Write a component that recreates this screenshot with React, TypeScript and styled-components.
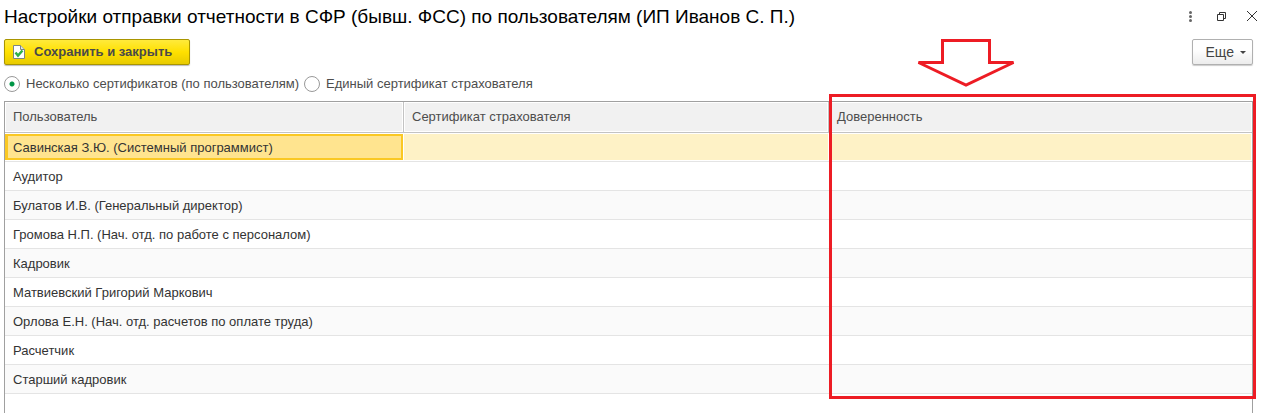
import React, { useState } from "react";
import styled, { createGlobalStyle } from "styled-components";

const GlobalStyle = createGlobalStyle`
  *, *::before, *::after { box-sizing: border-box; }
  body {
    margin: 0;
    background: #fff;
    color: #333;
    font: 13px/16px "Liberation Sans", Arial, sans-serif;
  }
`;

const Page = styled.main`
  display: flex;
  flex-direction: column;
  min-height: 100vh;
  padding: 0 14px 0 4px;
`;

const TitleBar = styled.header`
  display: flex;
  align-items: center;
  justify-content: space-between;
  height: 34px;
  margin-right: -7px;
`;

const Title = styled.h1`
  margin: 0;
  color: #000;
  font-size: 19px;
  line-height: 24px;
  font-weight: 400;
`;

const WindowControls = styled.div`
  display: flex;
  gap: 15px;
`;

const IconButton = styled.button`
  display: flex;
  padding: 0;
  border: 0;
  background: none;
  color: #333;
`;

const Toolbar = styled.div`
  display: flex;
  align-items: center;
  justify-content: space-between;
  padding-top: 5px;
`;

const SaveButton = styled.button`
  display: flex;
  align-items: center;
  gap: 8px;
  height: 26px;
  padding: 0 17px 0 8px;
  border: 1px solid #a99500;
  border-radius: 2px;
  background: linear-gradient(#ffea3c, #ffe000 50%, #e8cb00);
  box-shadow: 0 1px 1px #bbb;
  color: #4a4a4a;
  font: bold 13px/16px "Liberation Sans", Arial, sans-serif;
`;

const MoreButton = styled.button`
  display: flex;
  align-items: center;
  gap: 6px;
  height: 26px;
  padding: 0 6px 0 13px;
  border: 1px solid #b0b0b0;
  border-radius: 2px;
  background: linear-gradient(#fff 40%, #ececec);
  box-shadow: 0 1px 1px #ccc;
  color: #444;
  font: 14px/16px "Liberation Sans", Arial, sans-serif;
`;

const ModeGroup = styled.div`
  display: flex;
  gap: 5px;
  padding: 11px 0 9px;
`;

const ModeOption = styled.label`
  display: flex;
  align-items: center;
  gap: 6px;
  color: #4d4d4d;
`;

const Radio = styled.input`
  appearance: none;
  width: 16px;
  height: 16px;
  margin: 0;
  border: 1px solid #999;
  border-radius: 50%;
  background: #fff;

  &:checked {
    background: radial-gradient(circle, #009646 2px, #fff 3px);
  }
`;

const Frame = styled.section`
  flex: 1;
  border: 1px solid #a0a0a0;
  border-bottom: 0;
`;

const TableArea = styled.div`
  position: relative;
`;

const Table = styled.table`
  width: 100%;
  table-layout: fixed;
  border-collapse: separate;
  border-spacing: 0;
`;

const UserCol = styled.col`
  width: 399px;
`;

const CertificateCol = styled.col`
  width: 425px;
`;

const HeadCell = styled.th`
  height: 31px;
  padding: 0 8px;
  border-bottom: 1px solid #c3c3c3;
  background: #f1f1f1;
  box-shadow: inset 0 0 0 1px #fff;
  color: #4d4d4d;
  font-weight: 400;
  text-align: left;

  &:not(:last-child) {
    border-right: 1px solid #c3c3c3;
  }
`;

const Row = styled.tr<{ $selected: boolean }>`
  background: ${(p) => (p.$selected ? "#fef2c6" : "#fff")};

  &:nth-child(odd) {
    background: ${(p) => (p.$selected ? "#fef2c6" : "#fafafa")};
  }
`;

const Cell = styled.td<{ $selected: boolean; $current?: boolean }>`
  height: 29px;
  padding: 2px 8px 0;
  border-bottom: 1px solid #e4e4e4;
  box-shadow: ${(p) =>
    p.$current
      ? "inset 0 -1px #fff, inset -1px 0 #fff, inset 0 1px #fff, inset 0 0 0 3px #fac823"
      : p.$selected
        ? "inset 0 1px #fff, inset 0 -1px #fff, inset -1px 0 #fff"
        : "none"};
  background: ${(p) => (p.$current ? "#ffe48f" : "transparent")};
`;

const Highlight = styled.div`
  position: absolute;
  top: -8px;
  right: -4px;
  bottom: -5px;
  left: 824px;
  border: 3px solid #ed1c24;
  pointer-events: none;
`;

const Arrow = styled.svg`
  position: absolute;
  top: -63px;
  left: 83px;
`;

const users = [
  "Савинская З.Ю. (Системный программист)",
  "Аудитор",
  "Булатов И.В. (Генеральный директор)",
  "Громова Н.П. (Нач. отд. по работе с персоналом)",
  "Кадровик",
  "Матвиевский Григорий Маркович",
  "Орлова Е.Н. (Нач. отд. расчетов по оплате труда)",
  "Расчетчик",
  "Старший кадровик",
];

export default function App() {
  const [mode, setMode] = useState("several");
  const [selected, setSelected] = useState(0);

  return (
    <>
      <GlobalStyle />
      <Page>
        <TitleBar>
          <Title>Настройки отправки отчетности в СФР (бывш. ФСС) по пользователям (ИП Иванов С. П.)</Title>
          <WindowControls>
            <IconButton type="button" aria-label="Меню">
              <svg width="16" height="16" fill="#666">
                <circle cx="8.500" cy="3.500" r="1.500" />
                <circle cx="8.500" cy="7.500" r="1.500" />
                <circle cx="8.500" cy="11.500" r="1.500" />
              </svg>
            </IconButton>
            <IconButton type="button" aria-label="Развернуть">
              <svg width="16" height="16" fill="none" stroke="currentColor">
                <path d="M4.500 5.500h6v6h-6zM6.500 5.500v-2h6v6h-2" />
              </svg>
            </IconButton>
            <IconButton type="button" aria-label="Закрыть">
              <svg width="16" height="16" fill="none" stroke="currentColor">
                <path d="M3 2l10 10M13 2L3 12" />
              </svg>
            </IconButton>
          </WindowControls>
        </TitleBar>
        <Toolbar>
          <SaveButton type="button">
            <svg width="13" height="14" fill="none">
              <path d="M.5.5h7l4 4v9H.5z" fill="#fff" stroke="#7c8584" />
              <path d="M7.500.5v4h4" fill="#dfe5e5" stroke="#7c8584" />
              <path d="M2.500 7.500l2.500 3L9.500 5.500" stroke="#2fb04a" strokeWidth="2.500" />
            </svg>
            Сохранить и закрыть
          </SaveButton>
          <MoreButton type="button">
            Еще
            <svg width="6" height="3" fill="#444">
              <path d="M0 0h6L3 3z" />
            </svg>
          </MoreButton>
        </Toolbar>
        <ModeGroup role="radiogroup">
          <ModeOption>
            <Radio type="radio" name="mode" checked={mode === "several"} onChange={() => setMode("several")} />
            Несколько сертификатов (по пользователям)
          </ModeOption>
          <ModeOption>
            <Radio type="radio" name="mode" checked={mode === "single"} onChange={() => setMode("single")} />
            Единый сертификат страхователя
          </ModeOption>
        </ModeGroup>
        <Frame>
          <TableArea>
            <Table>
              <colgroup>
                <UserCol />
                <CertificateCol />
                <col />
              </colgroup>
              <thead>
                <tr>
                  <HeadCell>Пользователь</HeadCell>
                  <HeadCell>Сертификат страхователя</HeadCell>
                  <HeadCell>Доверенность</HeadCell>
                </tr>
              </thead>
              <tbody>
                {users.map((user, i) => (
                  <Row key={user} $selected={i === selected} onClick={() => setSelected(i)}>
                    <Cell $selected={i === selected} $current={i === selected}>{user}</Cell>
                    <Cell $selected={i === selected} />
                    <Cell $selected={i === selected} />
                  </Row>
                ))}
              </tbody>
            </Table>
            <Highlight>
              <Arrow width="104" height="54" fill="none" stroke="#ed1c24" strokeWidth="3">
                <path d="M27.500 6.500h47v22h24L51 51 3.500 28.500h24z" />
              </Arrow>
            </Highlight>
          </TableArea>
        </Frame>
      </Page>
    </>
  );
}
